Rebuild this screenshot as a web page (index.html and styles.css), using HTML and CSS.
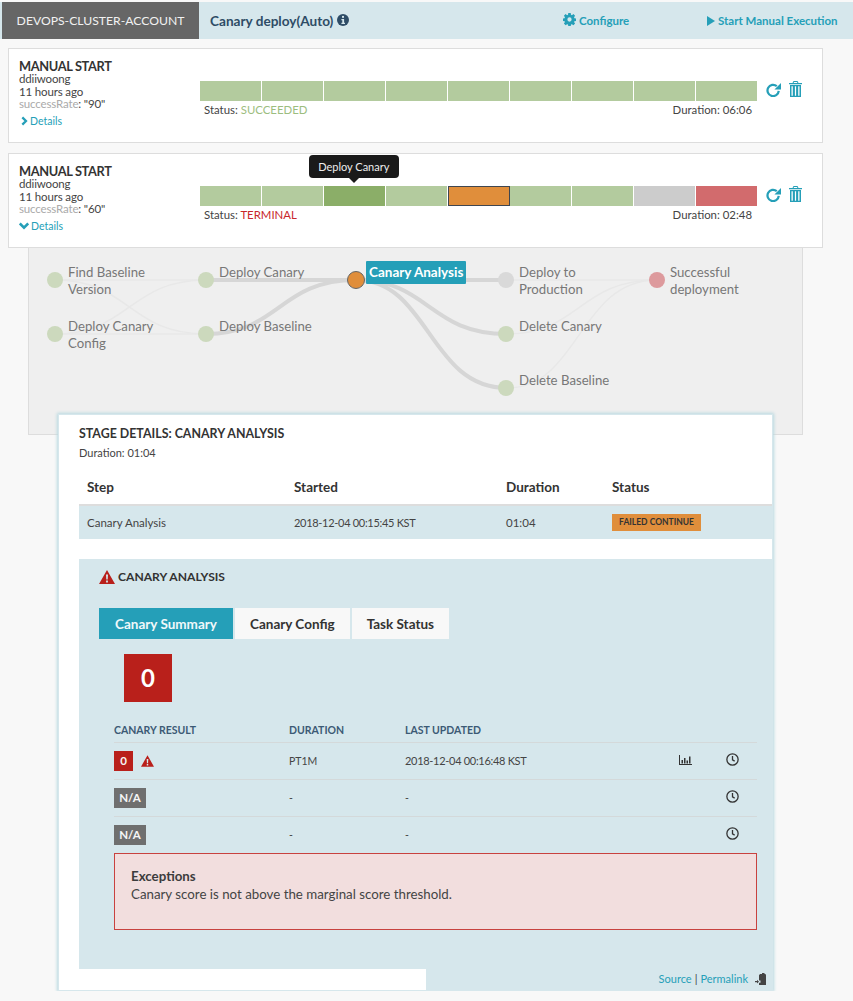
FILE: index.html
```html
<!DOCTYPE html>
<html lang="en">
<head>
  <meta charset="UTF-8">
  <title>Canary deploy(Auto)</title>
  <link rel="stylesheet" href="styles.css">
</head>
<body>
  <header class="group-head">
    <div class="account">DEVOPS-CLUSTER-ACCOUNT</div>
    <div class="pipeline-name">Canary deploy(Auto)
      <svg class="info" viewBox="0 0 12 12"><circle cx="6" cy="6" r="6" fill="#2e4c66"/><rect x="5" y="1.9" width="2" height="1.9" fill="#d6e7ec"/><path d="M4.4 5h2.7v3.7h.9V10H4.4V8.7h.9V6.300H4.400z" fill="#d6e7ec"/></svg>
    </div>
    <a class="head-link configure">
      <svg class="cog" viewBox="0 0 14 14"><path fill-rule="evenodd" fill="#259fb8" d="M5.700 0h2.600l.3 1.900 1 .4 1.600-1.100 1.800 1.800-1.100 1.600.4 1 1.900.3v2.600l-1.900.3-.4 1 1.100 1.600-1.800 1.800-1.600-1.100-1 .4-.3 1.900H5.700l-.3-1.900-1-.4-1.600 1.100L1 11.400l1.100-1.600-.4-1-1.700-.3V5.900l1.700-.3.400-1L1 3l1.800-1.800 1.600 1.100 1-.4zM7 4.700a2.300 2.300 0 1 0 0 4.600 2.300 2.300 0 0 0 0-4.600z"/></svg>
      Configure</a>
    <a class="head-link start">
      <svg class="play" viewBox="0 0 8 10"><path d="M0 0l8 5-8 5z" fill="#259fb8"/></svg>
      Start Manual Execution</a>
  </header>

  <section class="execution">
    <div class="trigger">
      <h4>MANUAL START</h4>
      <div>ddiiwoong</div>
      <div>11 hours ago</div>
      <div><span class="param">successRate</span>: "90"</div>
      <a class="details-link">
        <svg class="chev" viewBox="0 0 8 10"><path d="M1.500 0.800L5.700 5 1.500 9.200" fill="none" stroke="#259fb8" stroke-width="2.600"/></svg>
        Details</a>
    </div>
    <div class="progress">
      <div class="bar">
        <span class="seg ok"></span><span class="seg ok"></span><span class="seg ok"></span>
        <span class="seg ok"></span><span class="seg ok"></span><span class="seg ok"></span>
        <span class="seg ok"></span><span class="seg ok"></span><span class="seg ok"></span>
      </div>
      <div class="status-row">
        <span>Status: <span class="txt-ok">SUCCEEDED</span></span>
        <span>Duration: 06:06</span>
      </div>
    </div>
    <div class="actions">
      <svg class="redo" viewBox="0 0 16 16"><path d="M13.600 9.500A6 6 0 1 1 11.500 4.400" fill="none" stroke="#259fb8" stroke-width="2.400"/><path d="M16 1v7H9z" fill="#259fb8"/></svg>
      <svg class="trash" viewBox="0 0 13 16"><path fill="#259fb8" d="M4.500 0h4L9.500 2H13v1.300H0V2h3.500zM5 1l-.4 1h3.800L8 1zM1 4h11v12H1zM2.500 5.200v9.600h1.300V5.200zM5.900 5.200v9.600h1.200V5.200zM9.200 5.200v9.600h1.300V5.200z"/></svg>
    </div>
  </section>

  <section class="execution">
    <div class="trigger">
      <h4>MANUAL START</h4>
      <div>ddiiwoong</div>
      <div>11 hours ago</div>
      <div><span class="param">successRate</span>: "60"</div>
      <a class="details-link">
        <svg class="chev open" viewBox="0 0 10 8"><path d="M0.800 1.500L5 5.700l4.200-4.200" fill="none" stroke="#259fb8" stroke-width="2.600"/></svg>
        Details</a>
    </div>
    <div class="progress">
      <div class="bar">
        <span class="seg ok"></span><span class="seg ok"></span>
        <span class="seg ok hovered"><span class="tooltip">Deploy Canary</span></span>
        <span class="seg ok"></span><span class="seg active"></span><span class="seg ok"></span>
        <span class="seg ok"></span><span class="seg skipped"></span><span class="seg failed"></span>
      </div>
      <div class="status-row">
        <span>Status: <span class="txt-bad">TERMINAL</span></span>
        <span>Duration: 02:48</span>
      </div>
    </div>
    <div class="actions">
      <svg class="redo" viewBox="0 0 16 16"><path d="M13.600 9.500A6 6 0 1 1 11.500 4.400" fill="none" stroke="#259fb8" stroke-width="2.400"/><path d="M16 1v7H9z" fill="#259fb8"/></svg>
      <svg class="trash" viewBox="0 0 13 16"><path fill="#259fb8" d="M4.500 0h4L9.500 2H13v1.300H0V2h3.500zM5 1l-.4 1h3.800L8 1zM1 4h11v12H1zM2.500 5.200v9.600h1.300V5.200zM5.900 5.200v9.600h1.200V5.200zM9.200 5.200v9.600h1.300V5.200z"/></svg>
    </div>
  </section>

  <section class="graph">
    <svg class="links" viewBox="0 0 775 187" width="775" height="187">
      <g fill="none" stroke="#e8e8e8" stroke-width="1.500">
        <path d="M26 32H177"/>
        <path d="M26 86H177"/>
        <path d="M26 32C100 32 100 86 177 86"/>
        <path d="M26 86C100 86 100 32 177 32"/>
        <path d="M478 32H628"/>
        <path d="M478 86C550 86 550 32 628 32"/>
        <path d="M478 140C550 140 550 32 628 32"/>
      </g>
      <g fill="none" stroke="#d6d6d6" stroke-width="4">
        <path d="M177 32H327"/>
        <path d="M177 86C250 86 250 32 327 32"/>
        <path d="M327 32H478"/>
        <path d="M327 32C400 32 400 86 478 86"/>
        <path d="M327 32C400 32 400 140 478 140"/>
      </g>
    </svg>
    <div class="node n1"><i class="dot done"></i><span>Find Baseline Version</span></div>
    <div class="node n2"><i class="dot done"></i><span>Deploy Canary Config</span></div>
    <div class="node n3"><i class="dot done"></i><span>Deploy Canary</span></div>
    <div class="node n4"><i class="dot done"></i><span>Deploy Baseline</span></div>
    <div class="node n5"><i class="dot current"></i><span class="selected">Canary Analysis</span></div>
    <div class="node n6"><i class="dot idle"></i><span>Deploy to Production</span></div>
    <div class="node n7"><i class="dot done"></i><span>Delete Canary</span></div>
    <div class="node n8"><i class="dot done"></i><span>Delete Baseline</span></div>
    <div class="node n9"><i class="dot bad"></i><span>Successful deployment</span></div>
  </section>

  <section class="stage-details">
    <h5>STAGE DETAILS: CANARY ANALYSIS</h5>
    <div class="stage-duration">Duration: 01:04</div>
    <div class="step-row step-head">
      <span>Step</span><span>Started</span><span>Duration</span><span>Status</span>
    </div>
    <div class="step-row step-body">
      <span>Canary Analysis</span><span class="stamp">2018-12-04 00:15:45 KST</span><span>01:04</span>
      <span><b class="badge-warn">FAILED CONTINUE</b></span>
    </div>

    <div class="step-detail">
      <h6>
        <svg class="warn big" viewBox="0 0 16 14"><path fill-rule="evenodd" fill="#b9201b" d="M8 0l8 14H0zM7 4.500l.3 5h1.400l.3-5zM7.100 10.500v2h1.800v-2z"/></svg>
        CANARY ANALYSIS
      </h6>
      <div class="tabs">
        <a class="tab on">Canary Summary</a>
        <a class="tab">Canary Config</a>
        <a class="tab">Task Status</a>
      </div>
      <div class="score">0</div>
      <div class="result-row result-head">
        <span>CANARY RESULT</span><span>DURATION</span><span>LAST UPDATED</span><span></span><span></span>
      </div>
      <div class="result-row">
        <span class="res"><b class="chip red">0</b>
          <svg class="warn" viewBox="0 0 16 14"><path fill-rule="evenodd" fill="#b9201b" d="M8 0l8 14H0zM7 4.500l.3 5h1.400l.3-5zM7.100 10.500v2h1.800v-2z"/></svg>
        </span>
        <span>PT1M</span><span class="stamp">2018-12-04 00:16:48 KST</span>
        <span><svg class="chart" viewBox="0 0 13 10"><path fill="#333" d="M0 0h1v9h12v1H0zM2.500 5h1.500v3.500H2.500zM5 3h1.500v5.500H5zM7.500 5.500H9v3H7.500zM10 1.500h1.500v7H10z"/></svg></span>
        <span><svg class="clock" viewBox="0 0 12 12"><circle cx="6" cy="6" r="5.200" fill="none" stroke="#333" stroke-width="1.200"/><path d="M6 2.800v3.500l2 1.200" fill="none" stroke="#333" stroke-width="1.200"/></svg></span>
      </div>
      <div class="result-row">
        <span class="res"><b class="chip gray">N/A</b></span><span>-</span><span>-</span><span></span>
        <span><svg class="clock" viewBox="0 0 12 12"><circle cx="6" cy="6" r="5.200" fill="none" stroke="#333" stroke-width="1.200"/><path d="M6 2.800v3.500l2 1.200" fill="none" stroke="#333" stroke-width="1.200"/></svg></span>
      </div>
      <div class="result-row last">
        <span class="res"><b class="chip gray">N/A</b></span><span>-</span><span>-</span><span></span>
        <span><svg class="clock" viewBox="0 0 12 12"><circle cx="6" cy="6" r="5.200" fill="none" stroke="#333" stroke-width="1.200"/><path d="M6 2.800v3.500l2 1.200" fill="none" stroke="#333" stroke-width="1.200"/></svg></span>
      </div>
      <div class="exceptions">
        <strong>Exceptions</strong>
        <div>Canary score is not above the marginal score threshold.</div>
      </div>
    </div>
    <div class="stage-foot">
      <div class="foot-blank"></div>
      <div class="foot-links">
        <a>Source</a> <span class="pipe">|</span> <a>Permalink</a>
        <svg class="clip" viewBox="0 0 12 12"><path fill="#444" d="M5 1h2V0h2.500v1h1l.5 1.200V12H4V9.800h1.500V7.500H4V2.200z"/><path fill="#444" d="M0 8.100h2V6.800l2 1.850-2 1.850V9.200H0z"/></svg>
      </div>
    </div>
  </section>
</body>
</html>
```

FILE: styles.css
```css
* {
  box-sizing: border-box;
}
body {
  margin: 0;
  padding-top: 2px;
  background: #f8f8f8;
  color: #444;
  font-family: "Lato", "Open Sans", sans-serif;
  font-size: 13px;
}
svg {
  display: inline-block;
}
a {
  color: #259fb8;
}

/* top bar */
.group-head {
  display: flex;
  align-items: center;
  height: 37px;
  padding-left: 2px;
  background: #d6e7ec;
}
.account {
  width: 197px;
  height: 37px;
  line-height: 37px;
  text-align: center;
  background: #666;
  color: #f2f2f2;
  font-size: 12.200px;
}
.pipeline-name {
  display: flex;
  align-items: center;
  gap: 4px;
  width: 353px;
  margin-left: 11px;
  color: #2e4c66;
  font-size: 13.600px;
  font-weight: 700;
}
.info {
  width: 12px;
  height: 12px;
  margin-top: -2px;
}
.head-link {
  display: flex;
  align-items: center;
  font-size: 11.500px;
  font-weight: 700;
}
.configure {
  gap: 3px;
  width: 144px;
}
.start {
  gap: 3px;
}
.cog {
  width: 13px;
  height: 13px;
  margin-top: -3px;
}
.play {
  width: 8px;
  height: 10px;
}

/* execution rows */
.execution {
  display: flex;
  width: 815px;
  height: 95px;
  margin: 9px 0 0 8px;
  padding: 10px 0 0 10px;
  background: #fff;
  border: 1px solid #ddd;
}
.execution + .execution {
  margin-top: 10px;
}
.trigger {
  width: 181px;
  line-height: 12.500px;
  font-size: 11.500px;
  letter-spacing: -0.150px;
  color: #444;
}
.trigger h4 {
  margin: 0;
  line-height: 14px;
  font-size: 12.800px;
  letter-spacing: -0.350px;
  font-weight: 700;
  color: #333;
}
.param {
  color: #aaa;
}
.details-link {
  display: flex;
  align-items: center;
  gap: 2px;
  margin: 3px 0 0 2px;
  line-height: 14px;
  font-size: 10.500px;
  letter-spacing: 0;
}
.chev {
  width: 7px;
  height: 10px;
}
.chev.open {
  width: 10px;
  height: 8px;
  margin-left: -2px;
}
.progress {
  width: 557px;
  margin-top: 22px;
}
.bar {
  display: flex;
  height: 20px;
}
.seg {
  position: relative;
  flex: 1;
  border-right: 1px solid #fff;
}
.seg:last-child {
  border-right: 0;
}
.seg.ok {
  background: #b3cb9e;
}
.seg.hovered {
  background: #8bae68;
}
.seg.active {
  background: #e08e3b;
  border: 1px solid #3f4650;
}
.seg.skipped {
  background: #ccc;
}
.seg.failed {
  background: #d26b6d;
}
.tooltip {
  position: absolute;
  left: -15px;
  top: -31px;
  width: 90px;
  height: 23px;
  line-height: 23px;
  text-align: center;
  background: #1a1a1a;
  color: #eee;
  border-radius: 4px;
  font-size: 11px;
}
.tooltip::after {
  content: "";
  position: absolute;
  left: 40px;
  bottom: -5px;
  border: 5px solid transparent;
  border-bottom: 0;
  border-top-color: #1a1a1a;
}
.status-row {
  display: flex;
  justify-content: space-between;
  margin-top: 2px;
  padding: 0 5px 0 4px;
  font-size: 11.400px;
  line-height: 14px;
}
.txt-ok {
  color: #9cbd7f;
}
.txt-bad {
  color: #c8262a;
}
.actions {
  display: flex;
  gap: 8px;
  margin: 22px 0 0 9px;
  height: 16px;
}
.redo {
  width: 15px;
  height: 15px;
  margin-top: 1px;
}
.trash {
  width: 13px;
  height: 16px;
}

/* graph */
.graph {
  position: relative;
  width: 775px;
  height: 187px;
  margin-left: 28px;
  background: #efefef;
  border: 1px solid #ddd;
  border-top: 0;
}
.links {
  position: absolute;
  left: 0;
  top: 0;
}
.node {
  position: absolute;
  display: flex;
  width: 130px;
  color: #777;
  font-size: 13.200px;
  line-height: 17px;
}
.node .dot {
  flex: none;
  width: 16px;
  height: 16px;
  margin: 8px 5px 0 0;
  border-radius: 50%;
}
.dot.done {
  background: #ccd9bd;
}
.dot.idle {
  background: #d9d9d9;
}
.dot.bad {
  background: #dd9a9d;
}
.node .dot.current {
  width: 18px;
  height: 18px;
  margin-top: 7px;
  background: #e08e3b;
  border: 1px solid #666;
}
.n1 { left: 18px; top: 16px; }
.n2 { left: 18px; top: 70px; }
.n3 { left: 169px; top: 16px; }
.n4 { left: 169px; top: 70px; }
.n5 { left: 318px; top: 16px; width: 160px; }
.n6 { left: 469px; top: 16px; }
.n7 { left: 469px; top: 70px; }
.n8 { left: 469px; top: 124px; }
.n9 { left: 620px; top: 16px; }
.selected {
  align-self: flex-start;
  width: 100px;
  height: 23px;
  margin: -3px 0 0 -4px;
  padding: 0 3px;
  line-height: 23px;
  white-space: nowrap;
  font-size: 13.500px;
  font-weight: 700;
  color: #fff;
  background: #259fb8;
  border-radius: 1px;
}

/* stage details panel */
.stage-details {
  position: relative;
  width: 715px;
  margin: -21px 0 0 58px;
  padding: 11px 0 0 20px;
  background: #fff;
  border: 1px solid #d6e7ec;
  box-shadow: 0 0 3px 1px #b9d9e0;
}
.stage-details h5 {
  margin: 0;
  line-height: 16px;
  font-size: 12.400px;
  font-weight: 700;
  color: #333;
}
.stage-duration {
  margin-top: 3px;
  line-height: 16px;
  font-size: 11px;
}
.step-row {
  display: grid;
  grid-template-columns: 207px 212px 106px 1fr;
  align-items: center;
  padding-left: 8px;
}
.step-head {
  height: 37px;
  margin-top: 8px;
  border-bottom: 2px solid #ddd;
  font-size: 13.500px;
  font-weight: 700;
  color: #333;
}
.step-body {
  height: 33px;
  background: #d6e7ec;
  font-size: 11.500px;
}
.stamp {
  font-size: 11px;
  letter-spacing: -0.300px;
}
.badge-warn {
  display: inline-block;
  width: 89px;
  height: 17px;
  line-height: 17px;
  text-align: center;
  background: #e08e3b;
  color: #333;
  font-size: 8.500px;
}
.step-detail {
  height: 410px;
  margin-top: 20px;
  padding: 10px 0 0 20px;
  background: #d6e7ec;
}
.step-detail h6 {
  display: flex;
  align-items: center;
  gap: 3px;
  margin: 0;
  line-height: 16px;
  font-size: 12.100px;
  font-weight: 700;
  color: #333;
}
.warn {
  width: 13px;
  height: 12px;
}
.warn.big {
  width: 16px;
  height: 14px;
}
.tabs {
  display: flex;
  gap: 2px;
  margin-top: 23px;
}
.tab {
  height: 31px;
  padding: 0 15px;
  line-height: 32px;
  white-space: nowrap;
  background: #f8f8f8;
  font-size: 13.500px;
  font-weight: 700;
  color: #333;
}
.tab.on {
  width: 134px;
  padding: 0;
  text-align: center;
  background: #259fb8;
  color: #f0f8fa;
}
.score {
  width: 48px;
  height: 48px;
  margin: 15px 0 0 25px;
  line-height: 48px;
  text-align: center;
  background: #b9201b;
  color: #fff;
  font-size: 24px;
  font-weight: 700;
}
.result-row {
  display: grid;
  grid-template-columns: 175px 116px 273px 48px 1fr;
  align-items: center;
  width: 643px;
  height: 37px;
  margin-left: 15px;
  padding-bottom: 1px;
  border-bottom: 1px solid #d4d9da;
  font-size: 10.500px;
}
.result-row.last {
  height: 36px;
  border-bottom: 0;
}
.result-head {
  height: 32px;
  margin-top: 9px;
  padding: 6px 0 0;
  font-weight: 700;
  color: #3c5a75;
}
.res {
  display: flex;
  align-items: center;
  gap: 8px;
}
.chip {
  height: 20px;
  line-height: 20px;
  text-align: center;
  color: #f6f6f6;
  font-size: 11.500px;
}
.chip.red {
  width: 19px;
  background: #b9201b;
}
.chip.gray {
  width: 32px;
  background: #6f6f6f;
}
.chart {
  width: 13px;
  height: 10px;
  margin-left: 1px;
}
.clock {
  width: 13px;
  height: 13px;
}
.exceptions {
  width: 643px;
  height: 77px;
  margin-left: 15px;
  padding: 13px 16px;
  background: #f2dede;
  border: 1px solid #c8423f;
  font-size: 13.300px;
  line-height: 18px;
}
.exceptions strong {
  color: #3c3c3c;
}
.stage-foot {
  display: flex;
  height: 21px;
}
.foot-blank {
  width: 347px;
}
.foot-links {
  flex: 1;
  display: flex;
  align-items: center;
  justify-content: flex-end;
  gap: 3px;
  padding: 0 5px 2px 0;
  background: #d6e7ec;
  font-size: 11px;
}
.clip {
  width: 12px;
  height: 12px;
  margin-left: 4px;
}
.pipe {
  color: #444;
}
```
